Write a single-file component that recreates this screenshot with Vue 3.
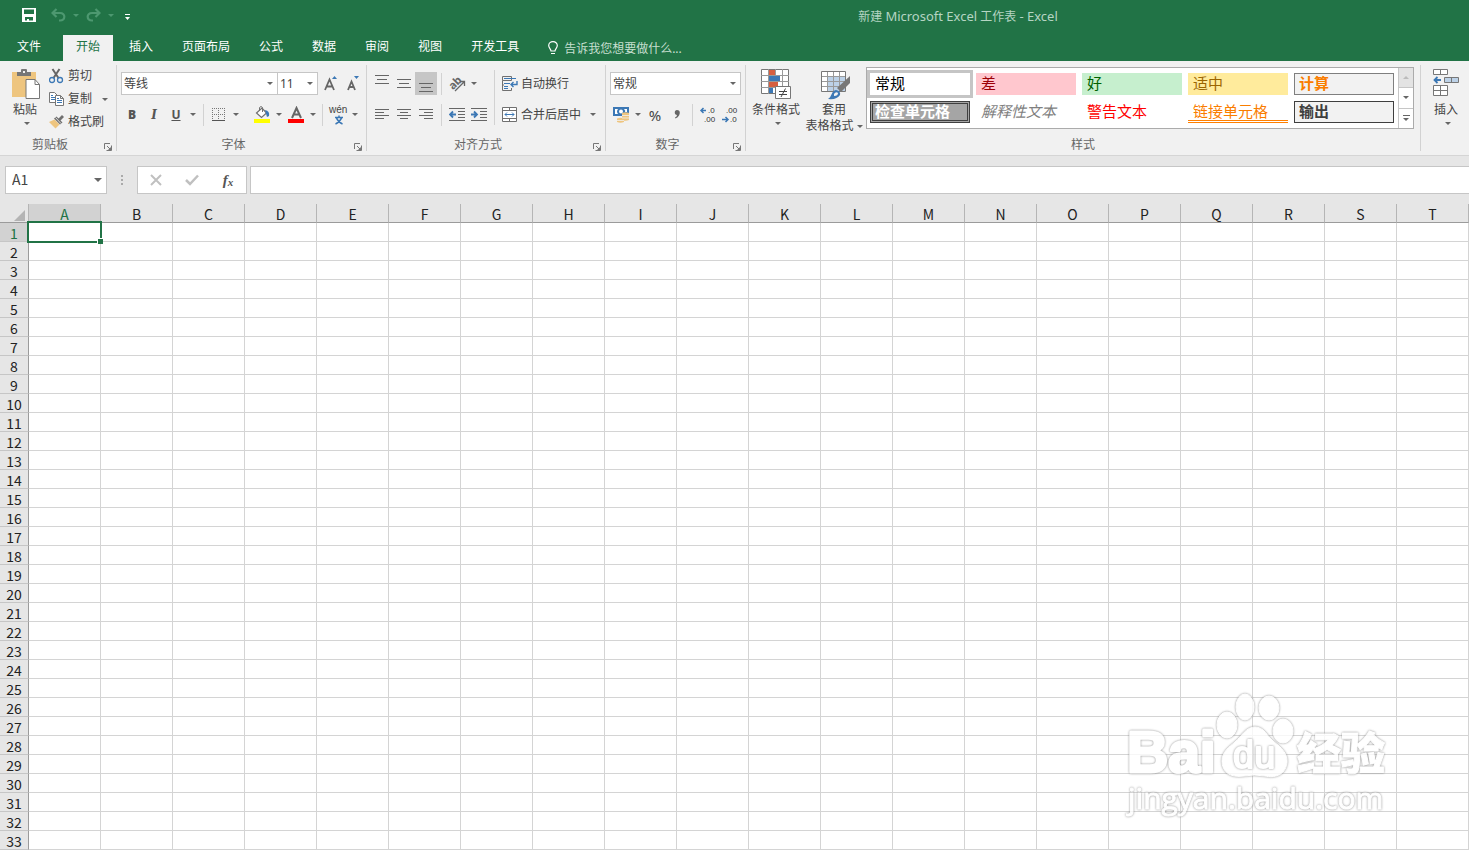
<script setup>
import { ref } from 'vue'

const tabs = ['文件', '开始', '插入', '页面布局', '公式', '数据', '审阅', '视图', '开发工具']
const activeTab = ref('开始')
const columns = 'ABCDEFGHIJKLMNOPQRST'.split('')
const rows = Array.from({ length: 33 }, (_, i) => i + 1)
const cellStyles = [
  { name: '常规', cls: 'normal' },
  { name: '差', cls: 'bad' },
  { name: '好', cls: 'good' },
  { name: '适中', cls: 'neutral' },
  { name: '计算', cls: 'calc' },
  { name: '检查单元格', cls: 'check' },
  { name: '解释性文本', cls: 'explain' },
  { name: '警告文本', cls: 'warn' },
  { name: '链接单元格', cls: 'linked' },
  { name: '输出', cls: 'output' }
]
const formula = ref('')
</script>

<template>
  <div class="app">
    <header class="top">
      <div class="titlebar">
        <div class="qat">
          <button class="q save" aria-label="保存">
            <svg width="14" height="14" viewBox="0 0 14 14"><path fill="#fff" fill-rule="evenodd" d="M0 0H14V14H0ZM2 1.500V6H12V1.500ZM3 9V12.500H5V11H7V12.500H11V9Z" /></svg>
          </button>
          <button class="q dim" aria-label="撤消">
            <svg width="15" height="14" viewBox="0 0 15 14"><path d="M5.500 1L1.500 5L5.500 9M2 5H9C15 5 14.500 12.500 9 12.500H8" fill="none" stroke="currentColor" stroke-width="2.200" /></svg>
          </button>
          <button class="q dim small" aria-label="撤消列表"><i class="arrow"></i></button>
          <button class="q dim" aria-label="恢复">
            <svg width="15" height="14" viewBox="0 0 15 14"><path d="M9.500 1L13.500 5L9.500 9M13 5H6C0 5 .500 12.500 6 12.500H7" fill="none" stroke="currentColor" stroke-width="2.200" /></svg>
          </button>
          <button class="q dim small" aria-label="恢复列表"><i class="arrow"></i></button>
          <button class="q custom" aria-label="自定义快速访问工具栏">
            <svg width="7" height="7" viewBox="0 0 7 7"><path fill="#fff" d="M1 0H6V1H1ZM1 3H6L3.500 6Z" /></svg>
          </button>
        </div>
        <div class="title">新建 <span>Microsoft Excel</span> 工作表 <span>- Excel</span></div>
      </div>
      <nav class="tabs">
        <button
          v-for="t in tabs"
          :key="t"
          class="tab"
          :class="{ active: t === activeTab, file: t === '文件' }"
          @click="activeTab = t"
        >{{ t }}</button>
        <label class="tell">
          <svg width="10" height="14" viewBox="0 0 10 14"><path d="M3 10C3 8 .700 7 .700 4.500A4.300 3.900 0 0 1 9.300 4.500C9.300 7 7 8 7 10ZM3 12.500H7" fill="none" stroke="#fff" stroke-width="1.200" /></svg>
          <input type="text" placeholder="告诉我您想要做什么..." aria-label="告诉我您想要做什么" />
        </label>
      </nav>
    </header>

    <section class="ribbon">
      <div class="group clipboard">
        <div class="body">
          <button class="big paste">
            <svg width="30" height="31" viewBox="0 0 30 31">
              <path fill="#eec57f" d="M0 3H24V28H0Z" />
              <path fill="#777" d="M5 3H9V1Q9 0 10 0H14Q15 0 15 1V3H19V7H5Z" />
              <path fill="#f1f1f1" d="M11 2H13V4H11Z" />
              <path d="M14 10.500H23L27.500 15.500V29.500H14Z" fill="#fff" stroke="#777" />
              <path d="M23 10.500V15.500H27.500" fill="none" stroke="#777" />
            </svg>
            <span>粘贴</span><i class="arrow"></i>
          </button>
          <div class="stack">
            <button class="cmd">
              <svg width="15" height="16" viewBox="0 0 15 16">
                <path d="M3.500 1L9.500 10M10.500 1L4.500 10" stroke="#666" stroke-width="2" />
                <circle cx="3" cy="12" r="2.500" fill="none" stroke="#3c78b5" stroke-width="1.300" />
                <circle cx="11" cy="12" r="2.500" fill="none" stroke="#3c78b5" stroke-width="1.300" />
              </svg><span>剪切</span>
            </button>
            <button class="cmd">
              <svg width="15" height="16" viewBox="0 0 15 16">
                <path d="M.500 1.500H5.500L8.500 4.500V11.500H.500Z" fill="#fff" stroke="#777" />
                <path d="M2 4.500H4M2 6.500H6M2 8.500H6" stroke="#3c78b5" />
                <path d="M6.500 4.500H11.500L14.500 7.500V14.500H6.500ZM11.500 4.500V7.500H14.500" fill="#fff" stroke="#777" />
                <path d="M8 7.500H10M8 9.500H13M8 11.500H13" stroke="#3c78b5" />
              </svg><span>复制</span><i class="arrow"></i>
            </button>
            <button class="cmd">
              <svg width="15" height="16" viewBox="0 0 15 16">
                <path fill="#eec57f" d="M0 8L5.500 5.500L10.500 10.500L6.500 14.500Z" />
                <path fill="#707070" d="M5 4.500L7.500 2.500L9.500 4.500L13 1L15 3L11.500 6.500L13.500 8.500L11 10.500Z" />
                <path d="M6.500 3.500L12 9.500" stroke="#f1f1f1" stroke-width=".8" />
              </svg><span>格式刷</span>
            </button>
          </div>
        </div>
        <footer><span>剪贴板</span><button class="launch" aria-label="剪贴板设置"><svg width="8" height="8" viewBox="0 0 8 8"><path d="M.500 6V.500H6M3 3L6 6M7.500 2.500V7.500H2.500" fill="none" stroke="#777" /><path fill="#777" d="M7 4V7H4Z" /></svg></button></footer>
      </div>

      <div class="group font">
        <div class="body lines">
          <div class="line">
            <div class="combo face"><select aria-label="字体"><option>等线</option></select><i class="arrow"></i></div>
            <div class="combo size"><select aria-label="字号"><option>11</option></select><i class="arrow"></i></div>
            <button class="ic" aria-label="增大字号"><svg width="16" height="18" viewBox="0 0 16 18"><path d="M2 15L6.500 4.500L11 15M3.500 11.500H9.500" fill="none" stroke="#666" stroke-width="1.800" /><path d="M9 4H14L11.500 1Z" fill="#3c78b5" /></svg></button>
            <button class="ic" aria-label="减小字号"><svg width="16" height="18" viewBox="0 0 16 18"><path d="M3 15L6.500 6.500L10 15M4.500 12H8.500" fill="none" stroke="#666" stroke-width="1.800" /><path d="M9 1H14L11.500 4Z" fill="#3c78b5" /></svg></button>
          </div>
          <div class="line">
            <button class="ic txt"><b>B</b></button>
            <button class="ic txt"><em>I</em></button>
            <button class="ic txt"><u>U</u></button>
            <button class="drop" aria-label="下划线选项"><i class="arrow"></i></button>
            <i class="sep first"></i>
            <button class="ic" aria-label="边框"><svg width="14" height="14" viewBox="0 0 14 14"><path d="M.500 0V12M6.500 0V12M12.500 0V12M0 .500H13M0 6.500H13" stroke="#777" stroke-dasharray="1 1" /><path d="M0 12.500H13" stroke="#555" /></svg></button>
            <button class="drop" aria-label="边框选项"><i class="arrow"></i></button>
            <button class="ic gap" aria-label="填充颜色"><svg width="16" height="17" viewBox="0 0 16 17"><path d="M2.500 7L8 2L12.500 7L7.500 11.500Z" fill="#fff" stroke="#707070" stroke-width="1.200" /><path d="M5.500 5V1.500Q7 -.500 8.500 1.500V6" fill="none" stroke="#707070" /><path d="M11 4Q16 5 15 10L13 11Z" fill="#3c78b5" /><path d="M0 13H16V17H0Z" fill="#ff0" /></svg></button>
            <button class="drop" aria-label="填充颜色选项"><i class="arrow"></i></button>
            <button class="ic near" aria-label="字体颜色"><svg width="16" height="17" viewBox="0 0 16 17"><path d="M4 12L8.500 2L13 12M5.500 8.500H11" fill="none" stroke="#666" stroke-width="2" /><path d="M0 13H16V17H0Z" fill="#f00" /></svg></button>
            <button class="drop" aria-label="字体颜色选项"><i class="arrow"></i></button>
            <i class="sep"></i>
            <button class="ic" aria-label="显示拼音">
              <svg width="22" height="22" viewBox="0 0 22 22"><text x="2" y="9" class="wen">wén</text><path d="M8 13.500H16M12 11.500V13.500M9.500 14Q11 18 15.500 20M14.500 14Q13 18 8.500 20" fill="none" stroke="#3c78b5" stroke-width="1.500" /></svg>
            </button>
            <button class="drop" aria-label="拼音选项"><i class="arrow"></i></button>
          </div>
        </div>
        <footer><span>字体</span><button class="launch" aria-label="字体设置"><svg width="8" height="8" viewBox="0 0 8 8"><path d="M.500 6V.500H6M3 3L6 6M7.500 2.500V7.500H2.500" fill="none" stroke="#777" /><path fill="#777" d="M7 4V7H4Z" /></svg></button></footer>
      </div>

      <div class="group align">
        <div class="body cols">
          <div class="lines left">
            <div class="line">
              <button class="ic" aria-label="顶端对齐"><svg width="14" height="17" viewBox="0 0 14 17"><path d="M0 .500H14M2 4.500H12M0 8.500H14" stroke="#666" /></svg></button>
              <button class="ic" aria-label="垂直居中"><svg width="14" height="17" viewBox="0 0 14 17"><path d="M0 4.500H14M2 8.500H12M0 12.500H14" stroke="#666" /></svg></button>
              <button class="ic on" aria-label="底端对齐"><svg width="14" height="17" viewBox="0 0 14 17"><path d="M0 8.500H14M2 12.500H12M0 16.500H14" stroke="#666" /></svg></button>
              <i class="sep"></i>
              <button class="ic" aria-label="方向"><svg width="22" height="22" viewBox="0 0 22 22"><text x="3" y="14" transform="rotate(-45 9 11)" class="ab">ab</text><path d="M9 18L18 9M14 8.500H18.500V13" fill="none" stroke="#666" stroke-width="1.300" /></svg></button>
              <button class="drop" aria-label="方向选项"><i class="arrow"></i></button>
            </div>
            <div class="line">
              <button class="ic" aria-label="左对齐"><svg width="14" height="11" viewBox="0 0 14 11"><path d="M0 .500H14M0 3.500H9M0 6.500H14M0 9.500H9" stroke="#666" /></svg></button>
              <button class="ic" aria-label="居中"><svg width="14" height="11" viewBox="0 0 14 11"><path d="M0 .500H14M3 3.500H11M0 6.500H14M3 9.500H11" stroke="#666" /></svg></button>
              <button class="ic" aria-label="右对齐"><svg width="14" height="11" viewBox="0 0 14 11"><path d="M0 .500H14M5 3.500H14M0 6.500H14M5 9.500H14" stroke="#666" /></svg></button>
              <i class="sep"></i>
              <button class="ic" aria-label="减少缩进量"><svg width="16" height="14" viewBox="0 0 16 14"><path d="M0 .500H16M9 3.500H16M9 6.500H16M9 9.500H16M0 12.500H16" stroke="#666" /><path d="M7 6.500H1M4 3.500L1 6.500L4 9.500" fill="none" stroke="#3c78b5" stroke-width="1.800" /></svg></button>
              <button class="ic" aria-label="增加缩进量"><svg width="16" height="14" viewBox="0 0 16 14"><path d="M0 .500H16M9 3.500H16M9 6.500H16M9 9.500H16M0 12.500H16" stroke="#666" /><path d="M0 6.500H6M3 3.500L6 6.500L3 9.500" fill="none" stroke="#3c78b5" stroke-width="1.800" /></svg></button>
            </div>
          </div>
          <i class="sep tall"></i>
          <div class="lines right">
            <div class="line">
              <button class="cmd">
                <svg width="16" height="16" viewBox="0 0 16 16"><path d="M.500 .500H9.500V4.500H.500ZM.500 4.500V14.500H9.500V12M.500 9H2" fill="none" stroke="#707070" /><path d="M2 2.500H14M2 7.500H8M2 10.500H6M2 12.500H6" stroke="#3c78b5" /><path d="M15 5V8.500H9M11.500 6L9 8.500L11.500 11" fill="none" stroke="#3c78b5" stroke-width="1.400" /></svg>
                <span>自动换行</span>
              </button>
            </div>
            <div class="line">
              <button class="cmd">
                <svg width="16" height="16" viewBox="0 0 16 16"><path d="M.500 .500H14.500V14.500H.500ZM.500 3.500H14.500M.500 11.500H14.500M7.500 .500V3.500M7.500 11.500V14.500" fill="#fff" stroke="#707070" /><path d="M3 7.500H12M5 5.500L3 7.500L5 9.500M10 5.500L12 7.500L10 9.500" fill="none" stroke="#3c78b5" /></svg>
                <span>合并后居中</span>
              </button>
              <button class="drop mergedrop" aria-label="合并选项"><i class="arrow"></i></button>
            </div>
          </div>
        </div>
        <footer><span>对齐方式</span><button class="launch" aria-label="对齐设置"><svg width="8" height="8" viewBox="0 0 8 8"><path d="M.500 6V.500H6M3 3L6 6M7.500 2.500V7.500H2.500" fill="none" stroke="#777" /><path fill="#777" d="M7 4V7H4Z" /></svg></button></footer>
      </div>

      <div class="group number">
        <div class="body lines">
          <div class="line">
            <div class="combo fmt"><select aria-label="数字格式"><option>常规</option></select><i class="arrow"></i></div>
          </div>
          <div class="line">
            <button class="ic" aria-label="会计数字格式"><svg width="17" height="17" viewBox="0 0 17 17"><path d="M0 1H16V10H0Z" fill="#3c78b5" /><path d="M2 3H5Q3 5.500 5 8H2ZM14 3H11Q13 5 12 6H14Z" fill="#fff" /><circle cx="8" cy="5.500" r="2" fill="#fff" /><path d="M9 7Q12.500 5.500 16 7V14Q12.500 15.500 9 14ZM4 12.500Q7.500 11 11 12.500V16Q7.500 17.500 4 16Z" fill="#eec57f" /><path d="M9 9.500H16M9 12H16M4 14.500H11" stroke="#f1f1f1" stroke-width=".8" /></svg></button>
            <button class="drop" aria-label="会计格式选项"><i class="arrow"></i></button>
            <button class="ic pct">%</button>
            <button class="ic comma" aria-label="千位分隔样式"><svg width="7" height="10" viewBox="0 0 7 10"><path d="M3 0C6 0 6.500 3 5 5.500Q4 7.500 1.500 8.500L1 7.500Q3 6.500 3 5C0 5 0 0 3 0Z" fill="#666" /></svg></button>
            <i class="sep"></i>
            <button class="ic" aria-label="增加小数位数"><svg width="18" height="22" viewBox="0 0 18 22"><path d="M7 6.500H2M4.500 4L2 6.500L4.500 9" fill="none" stroke="#3c78b5" stroke-width="1.500" /><text x="9" y="9" class="dec">.0</text><text x="5" y="18" class="dec">.00</text></svg></button>
            <button class="ic" aria-label="减少小数位数"><svg width="18" height="22" viewBox="0 0 18 22"><path d="M1 15.500H7M4.500 13L7 15.500L4.500 18" fill="none" stroke="#3c78b5" stroke-width="1.500" /><text x="5" y="9" class="dec">.00</text><text x="9" y="18" class="dec">.0</text></svg></button>
          </div>
        </div>
        <footer><span>数字</span><button class="launch" aria-label="数字设置"><svg width="8" height="8" viewBox="0 0 8 8"><path d="M.500 6V.500H6M3 3L6 6M7.500 2.500V7.500H2.500" fill="none" stroke="#777" /><path fill="#777" d="M7 4V7H4Z" /></svg></button></footer>
      </div>

      <div class="group styles">
        <div class="body cols">
          <button class="big cond">
            <svg width="30" height="31" viewBox="0 0 30 31">
              <path d="M.500 .500H27.500V24.500H.500Z" fill="#fff" stroke="#777" />
              <path d="M7.500 0V25M14.500 0V25M21.500 0V25M0 6.500H28M0 12.500H28M0 18.500H28" stroke="#999" />
              <path d="M8 1H14V6H8ZM8 13H17V18H8Z" fill="#d65f40" />
              <path d="M8 7H19V12H8ZM8 19H12V24H8Z" fill="#3c78b5" />
              <path d="M14.500 17.500H29.500V29.500H14.500Z" fill="#fff" stroke="#777" />
              <path d="M18 22.500H26M18 25.500H26M24.500 19.500L20 28" stroke="#444" />
            </svg>
            <span>条件格式</span><i class="arrow"></i>
          </button>
          <button class="big tablefmt">
            <svg width="30" height="31" viewBox="0 0 30 31">
              <path d="M.500 2.500H24.500V22.500H.500Z" fill="#fff" stroke="#777" />
              <path d="M7 8H24V22H7Z" fill="#bcd1e7" />
              <path d="M6.500 3V22M12.500 3V22M18.500 3V22M1 7.500H24M1 12.500H24M1 17.500H24" stroke="#999" />
              <path d="M29 7V14L20 23L16 19Z" fill="#777" />
              <path d="M7 30C11 28 10 22 15 21Q20 22 19 26Q16 31 7 30Z" fill="#3c78b5" />
              <path d="M13 25Q15 22 17 24Q17 27 13 27Z" fill="#f1f1f1" />
            </svg>
            <span>套用</span><span class="second">表格格式<i class="arrow"></i></span>
          </button>
          <div class="gallery">
            <div class="swatches">
              <button v-for="s in cellStyles" :key="s.name" class="sw" :class="s.cls">{{ s.name }}</button>
            </div>
            <div class="scroll">
              <button disabled aria-label="上一行"><i class="arrow up"></i></button>
              <button aria-label="下一行"><i class="arrow"></i></button>
              <button class="more" aria-label="其他"><i class="arrow"></i></button>
            </div>
          </div>
        </div>
        <footer><span>样式</span></footer>
      </div>

      <div class="group cells">
        <div class="body">
          <button class="big">
            <svg width="26" height="31" viewBox="0 0 26 31">
              <path d="M.500 .500H14.500V5.500H.500ZM7.500 .500V5.500M.500 16.500H14.500V26.500H.500ZM7.500 16.500V26.500M.500 21.500H14.500" fill="#fff" stroke="#777" />
              <path d="M11.500 8.500H25.500V13.500H11.500ZM18.500 8.500V13.500" fill="#bcd1e7" stroke="#777" />
              <path d="M8 11H2M4.500 8L1.500 11L4.500 14" fill="none" stroke="#3c78b5" stroke-width="1.800" />
            </svg>
            <span>插入</span><i class="arrow"></i>
          </button>
        </div>
      </div>
    </section>

    <section class="formulabar">
      <div class="namebox"><select aria-label="名称框"><option>A1</option></select><i class="arrow"></i></div>
      <div class="grip"><i></i><i></i><i></i></div>
      <div class="fbuttons">
        <button aria-label="取消"><svg width="12" height="12" viewBox="0 0 12 12"><path d="M1 1L11 11M11 1L1 11" stroke="#c0c0c0" stroke-width="2" /></svg></button>
        <button aria-label="输入"><svg width="14" height="12" viewBox="0 0 14 12"><path d="M1 6L5 10L13 1.500" fill="none" stroke="#c0c0c0" stroke-width="2.500" /></svg></button>
        <button class="fx" aria-label="插入函数"><i>f<sub>x</sub></i></button>
      </div>
      <input v-model="formula" class="finput" type="text" aria-label="编辑栏" />
    </section>

    <main class="sheet">
      <table>
        <thead>
          <tr>
            <th class="corner"><svg width="11" height="11" viewBox="0 0 11 11"><path d="M11 0V11H0Z" fill="#b4b4b4" /></svg></th>
            <th v-for="c in columns" :key="c" scope="col" :class="{ sel: c === 'A' }">{{ c }}</th>
          </tr>
        </thead>
        <tbody>
          <tr v-for="r in rows" :key="r">
            <th scope="row" :class="{ sel: r === 1 }">{{ r }}</th>
            <td v-for="c in columns" :key="c"><div v-if="r === 1 && c === 'A'" class="cursor"></div></td>
          </tr>
        </tbody>
      </table>
      <svg class="mark" width="280" height="140" viewBox="0 0 280 140" aria-label="Baidu 经验 jingyan.baidu.com">
        <text x="7" y="92" class="bai">Bai</text>
        <ellipse cx="107" cy="45" rx="10" ry="13" />
        <ellipse cx="125" cy="27" rx="9" ry="13" />
        <ellipse cx="149" cy="28" rx="10" ry="12" />
        <ellipse cx="163" cy="51" rx="10" ry="12" />
        <path d="M135 47C144 47 147 56 153 61C162 68 168 74 167 83C165 96 154 98 145 96Q134 94 124 96C110 98 102 92 102 81C102 72 109 67 115 62C122 56 126 47 135 47Z" />
        <text x="113" y="88" class="du">du</text>
        <text x="177" y="90" class="jy">经验</text>
        <text x="8" y="129" class="url">jingyan.baidu.com</text>
      </svg>
    </main>
  </div>
</template>

<style>
body {
  background: #fff;
  overflow: hidden;
}
</style>

<style scoped>
.app {
  font: 12px/16px "Noto Sans", "Noto Sans CJK SC", sans-serif;
  color: #444;
  overflow: hidden;
}
button, input, select {
  font: inherit;
  color: inherit;
  background: none;
  border: 0;
  padding: 0;
  margin: 0;
  border-radius: 0;
  white-space: nowrap;
}
svg { display: block; flex: none; }
.arrow {
  display: block;
  flex: none;
  border: 3px solid transparent;
  border-top-color: #666;
  border-bottom: 0;
}
.arrow.up { border-top: 0; border-bottom: 3px solid #bbb; }

.top { background: #217346; color: #fff; }
.titlebar { display: flex; height: 35px; }
.qat { display: flex; align-items: center; padding: 0 0 5px 22px; width: 425px; box-sizing: border-box; }
.q { height: 20px; display: flex; align-items: center; justify-content: center; }
.q.save { width: 14px; margin-right: 14px; }
.q.dim { color: #4d9870; width: 16px; }
.q.dim.small { width: 19px; }
.q.dim .arrow { border-top-color: #4d9870; }
.q.custom { width: 14px; padding-top: 4px; }
.title { flex: 1; text-align: center; line-height: 33px; color: #b5d5c3; padding-left: 22px; }
.title span { font-size: 13px; }
.tabs { display: flex; height: 26px; gap: 3px; }
.tab { padding: 0 13px 2px; }
.tab.file { padding: 0 19px 2px 17px; }
.tab.active { background: #f1f1f1; color: #217346; }
.tell { display: flex; align-items: center; gap: 6px; margin-left: 13px; }
.tell input { width: 130px; height: 22px; outline: 0; }
.tell input::placeholder { color: #c6dfd0; opacity: 1; }

.ribbon { display: flex; background: #f1f1f1; border-bottom: 1px solid #d5d5d5; padding: 4px 0; overflow: hidden; }
.group { flex: none; display: flex; flex-direction: column; height: 86px; border-right: 1px solid #d2d2d2; box-sizing: border-box; }
.clipboard { width: 117px; }
.font { width: 250px; }
.align { width: 239px; }
.number { width: 140px; }
.styles { width: 675px; }
.cells { width: 120px; border: 0; }
.body { flex: 1; display: flex; min-height: 0; }
.group footer { display: flex; flex: none; height: 14px; align-items: flex-end; color: #666; }
.group footer span { flex: 1; text-align: center; line-height: 12px; }
.launch { width: 16px; display: flex; justify-content: center; }
.big { display: flex; flex-direction: column; align-items: center; padding-top: 4px; height: 64px; flex: none; }
.big span { margin-top: 1px; padding-top: 1px; }
.big > .arrow { margin: 4px 0 0 3px; }
.paste { width: 28px; margin-left: 11px; }
.paste svg { margin-left: 4px; }
.stack { display: flex; flex-direction: column; gap: 7px; padding: 3px 0 0 10px; }
.cmd { display: flex; align-items: center; height: 16px; gap: 4px; }
.cmd .arrow { margin-left: 6px; }
.lines { display: flex; flex-direction: column; gap: 8px; padding: 7px 0 0 4px; }
.line { display: flex; align-items: center; height: 23px; }
.combo { position: relative; display: flex; align-items: center; height: 23px; box-sizing: border-box; background: #fff; border: 1px solid #c6c6c6; }
.combo select { appearance: none; width: 100%; height: 21px; padding-left: 2px; outline: 0; }
.combo .arrow, .namebox .arrow { position: absolute; right: 4px; pointer-events: none; }
.face { width: 157px; }
.size { width: 41px; margin: 0 2px 0 -1px; }
.fmt { width: 131px; }
.ic { width: 22px; height: 23px; flex: none; display: flex; align-items: center; justify-content: center; }
.ic.on { background: #c6c6c6; }
.txt { font: 700 12px/16px "Noto Sans", sans-serif; color: #555; }
.txt em { font-family: "DejaVu Serif", serif; }
.drop { width: 11px; height: 22px; display: flex; align-items: center; justify-content: center; }
.sep { width: 1px; height: 22px; background: #d2d2d2; margin: 0 4px; flex: none; }
.sep.first { margin-left: 5px; }
.sep.tall { height: 55px; margin: 5px 7px 0 0; }
.ic.gap { margin-left: 10px; }
.ic.near { margin-left: 1px; }
.wen { font: 10px "Liberation Sans", sans-serif; fill: #444; }
.left { width: 123px; }
.align .lines.right { padding-left: 0; }
.align .right .cmd { gap: 3px; }
.mergedrop { margin-left: 6px; }
.ab { font: 700 11px "Open Sans", sans-serif; fill: #666; }
.dec { font: 8px "Liberation Sans", sans-serif; fill: #333; }
.number .drop { margin-right: 1px; }
.pct { font-size: 15px; }

.cond { width: 56px; margin-left: 2px; }
.tablefmt { width: 60px; }
.tablefmt svg { margin-left: 3px; }
.tablefmt .second { display: flex; align-items: center; gap: 3px; margin: 0; padding: 0; }
.second .arrow { margin: 0; }
.gallery { display: flex; margin: 2px 0 0 2px; height: 62px; box-sizing: border-box; border: 1px solid #ababab; background: #fff; }
.swatches { display: grid; grid-template-columns: repeat(5, 100px); grid-auto-rows: 22px; gap: 6px; padding: 5px 4px 0 3px; }
.sw { font: 15px/20px "Noto Sans CJK SC", sans-serif; text-align: left; padding: 0 0 2px 5px; border: 0 solid; height: 22px; }
.normal { color: #000; outline: 3px solid #c5c5c5; }
.bad { background: #ffc7ce; color: #9c0006; }
.good { background: #c6efce; color: #006100; }
.neutral { background: #ffeb9c; color: #9c6500; }
.calc { background: #f2f2f2; border: 1px solid #7f7f7f; color: #fa7d00; font-weight: 700; padding: 0 0 2px 4px; line-height: 18px; }
.check { background: #a5a5a5; border: 3px double #3f3f3f; color: #fff; font-weight: 700; line-height: 14px; padding: 0 0 2px 2px; }
.explain { color: #7f7f7f; font-style: italic; }
.warn { color: #f00; }
.linked { color: #fa7d00; border-bottom: 3px double #ff8001; line-height: 19px; padding-bottom: 0; }
.output { background: #f2f2f2; border: 1px solid #3f3f3f; color: #3f3f3f; font-weight: 700; padding: 0 0 2px 4px; line-height: 18px; }
.scroll { width: 14px; display: flex; flex-direction: column; border-left: 1px solid #c6c6c6; }
.scroll button { flex: 1; display: flex; flex-direction: column; align-items: center; justify-content: center; gap: 2px; border-bottom: 1px solid #c6c6c6; }
.scroll button:disabled { background: #e3e3e3; }
.scroll .more { border-bottom: 0; }
.more::before { content: ""; width: 7px; height: 1px; background: #666; }
.cells .big { margin-left: 12px; }

.formulabar { display: flex; align-items: center; background: #e6e6e6; padding: 10px 0 10px 5px; height: 28px; }
.namebox, .fbuttons, .finput { height: 28px; box-sizing: border-box; background: #fff; border: 1px solid #c6c6c6; }
.namebox { position: relative; display: flex; align-items: center; width: 102px; }
.namebox select { appearance: none; width: 100%; height: 26px; padding: 0 0 2px 6px; font-size: 14px; outline: 0; font-family: "Noto Sans CJK SC", sans-serif; }
.namebox .arrow { border-width: 4px 4px 0; }
.grip { width: 30px; display: flex; flex-direction: column; align-items: center; gap: 2px; }
.grip i { width: 2px; height: 2px; background: #aaa; }
.fbuttons { display: flex; width: 110px; margin-right: 3px; }
.fbuttons button { flex: 1; display: flex; align-items: center; justify-content: center; }
.fx { font: 700 15px "Liberation Serif", serif; color: #555; }
.fx sub { font-size: 11px; vertical-align: -1px; }
.finput { flex: 1; border-right: 0; padding: 0 6px; outline: 0; min-width: 0; }

.sheet { position: relative; }
table { width: 100%; table-layout: fixed; border-collapse: separate; border-spacing: 0; font: 14px/16px "Noto Sans CJK SC", sans-serif; color: #222; }
th, td { box-sizing: border-box; height: 19px; padding: 2px 0 0; border-right: 1px solid #d4d4d4; border-bottom: 1px solid #d4d4d4; }
td { padding: 0; }
th { font-weight: 400; background: #e6e6e6; text-align: center; }
thead th { border-right-color: #b5b5b5; border-bottom-color: #9b9b9b; }
thead th:first-child { width: 29px; }
tbody th { border-right-color: #9b9b9b; border-bottom-color: #c6c6c6; }
.corner svg { margin: 2px 3px 0 auto; }
th.sel { background: #d2d2d2; color: #217346; }
td { background: #fff; position: relative; }
.cursor { position: absolute; z-index: 1; inset: -2px; border: 2px solid #217346; }
.cursor::after { content: ""; position: absolute; right: -3px; bottom: -3px; width: 5px; height: 5px; background: #217346; border: 1px solid #fff; border-right: 0; border-bottom: 0; }

.mark { position: absolute; right: 69px; bottom: 30px; pointer-events: none; opacity: .8; fill: #fff; stroke: #fff; stroke-width: 1; stroke-linejoin: round; }
.mark > * { filter: drop-shadow(0 0 1px #777); }
.bai { font: 700 57px "Liberation Sans", sans-serif; stroke-width: 3; }
.du { font: 38px "Liberation Sans", sans-serif; stroke-width: 2; }
.jy { font: 900 44px "Noto Sans CJK SC", sans-serif; }
.url { font: 30px "Open Sans", sans-serif; }
</style>
